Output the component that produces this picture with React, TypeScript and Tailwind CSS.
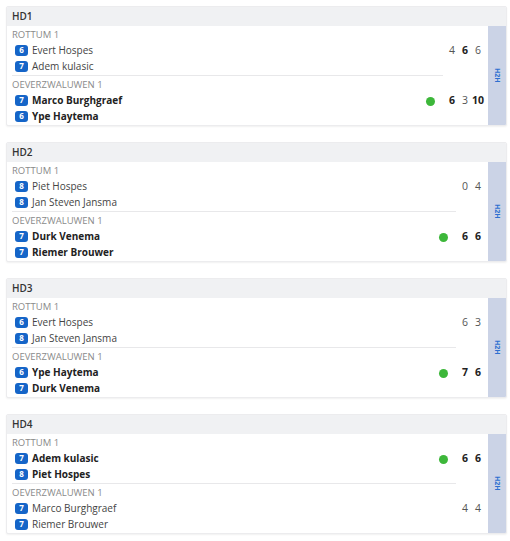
import React from 'react'

type Player = { rank: number; name: string }
type Team = { club: string; players: Player[]; scores: { v: number; won: boolean }[]; winner: boolean }
type Match = { title: string; teams: [Team, Team] }

const matches: Match[] = [
  {
    title: 'HD1',
    teams: [
      {
        club: 'ROTTUM 1',
        players: [{ rank: 6, name: 'Evert Hospes' }, { rank: 7, name: 'Adem kulasic' }],
        scores: [{ v: 4, won: false }, { v: 6, won: true }, { v: 6, won: false }],
        winner: false,
      },
      {
        club: 'OEVERZWALUWEN 1',
        players: [{ rank: 7, name: 'Marco Burghgraef' }, { rank: 6, name: 'Ype Haytema' }],
        scores: [{ v: 6, won: true }, { v: 3, won: false }, { v: 10, won: true }],
        winner: true,
      },
    ],
  },
  {
    title: 'HD2',
    teams: [
      {
        club: 'ROTTUM 1',
        players: [{ rank: 8, name: 'Piet Hospes' }, { rank: 8, name: 'Jan Steven Jansma' }],
        scores: [{ v: 0, won: false }, { v: 4, won: false }],
        winner: false,
      },
      {
        club: 'OEVERZWALUWEN 1',
        players: [{ rank: 7, name: 'Durk Venema' }, { rank: 7, name: 'Riemer Brouwer' }],
        scores: [{ v: 6, won: true }, { v: 6, won: true }],
        winner: true,
      },
    ],
  },
  {
    title: 'HD3',
    teams: [
      {
        club: 'ROTTUM 1',
        players: [{ rank: 6, name: 'Evert Hospes' }, { rank: 8, name: 'Jan Steven Jansma' }],
        scores: [{ v: 6, won: false }, { v: 3, won: false }],
        winner: false,
      },
      {
        club: 'OEVERZWALUWEN 1',
        players: [{ rank: 6, name: 'Ype Haytema' }, { rank: 7, name: 'Durk Venema' }],
        scores: [{ v: 7, won: true }, { v: 6, won: true }],
        winner: true,
      },
    ],
  },
  {
    title: 'HD4',
    teams: [
      {
        club: 'ROTTUM 1',
        players: [{ rank: 7, name: 'Adem kulasic' }, { rank: 8, name: 'Piet Hospes' }],
        scores: [{ v: 6, won: true }, { v: 6, won: true }],
        winner: true,
      },
      {
        club: 'OEVERZWALUWEN 1',
        players: [{ rank: 7, name: 'Marco Burghgraef' }, { rank: 7, name: 'Riemer Brouwer' }],
        scores: [{ v: 4, won: false }, { v: 4, won: false }],
        winner: false,
      },
    ],
  },
]

function TeamBlock({ team }: { team: Team }) {
  return (
    <div className="flex items-center pt-[2px] pb-px">
      <div className="flex-1">
        <div className="h-[14px] text-[9.5px] leading-[14px] text-[#8a8a8a] uppercase">{team.club}</div>
        {team.players.map((p) => (
          <div key={p.name} className="flex items-center gap-[4px] h-4 pl-[3px]">
            <span className="flex items-center justify-center w-[13px] h-[11px] rounded-[3px] bg-[#1565c8] text-white text-[8px] font-bold leading-none">
              {p.rank}
            </span>
            <span
              className={`text-[10px] leading-4 ${team.winner ? 'font-bold text-[#222]' : 'text-[#444]'}`}
            >
              {p.name}
            </span>
          </div>
        ))}
      </div>
      {team.winner && <span className="w-[9px] h-[9px] rounded-full bg-[#3db73a] mr-2" />}
    </div>
  )
}

function Scores({ team }: { team: Team }) {
  return (
    <div className="flex items-center gap-px">
      {team.scores.map((s, i) => (
        <span
          key={i}
          className={`w-3 text-center text-[10.5px] ${s.won ? 'font-bold text-[#222]' : 'text-[#555]'}`}
        >
          {s.v}
        </span>
      ))}
    </div>
  )
}

function MatchCard({ match }: { match: Match }) {
  const [a, b] = match.teams
  return (
    <div className="bg-white rounded-[2px] border border-[#ececee] shadow-[0_1px_2px_rgba(0,0,0,0.06)] overflow-hidden">
      <div className="h-[19px] bg-[#f0f1f3] px-[5px] flex items-center text-[10px] font-semibold text-[#333]">
        {match.title}
      </div>
      <div className="flex">
        <div className="flex-1 grid grid-cols-[1fr_auto] gap-x-[3px] pl-[5px] pr-[4px]">
          <TeamBlock team={a} />
          <div className="self-center">
            <Scores team={a} />
          </div>
          <div className="h-px bg-[#e8e8ea]" />
          <div />
          <TeamBlock team={b} />
          <div className="self-center">
            <Scores team={b} />
          </div>
        </div>
        <div className="w-[18px] bg-[#cbd3e6] flex items-center justify-center">
          <span className="[writing-mode:vertical-rl] text-[7px] font-bold text-[#2d6fd0] leading-none">H2H</span>
        </div>
      </div>
    </div>
  )
}

export default function App() {
  return (
    <div className="min-h-screen bg-white pt-[6px] pl-[6px] pr-[3px] flex flex-col gap-4 font-['Open_Sans',sans-serif]">
      {matches.map((m) => (
        <MatchCard key={m.title} match={m} />
      ))}
    </div>
  )
}
